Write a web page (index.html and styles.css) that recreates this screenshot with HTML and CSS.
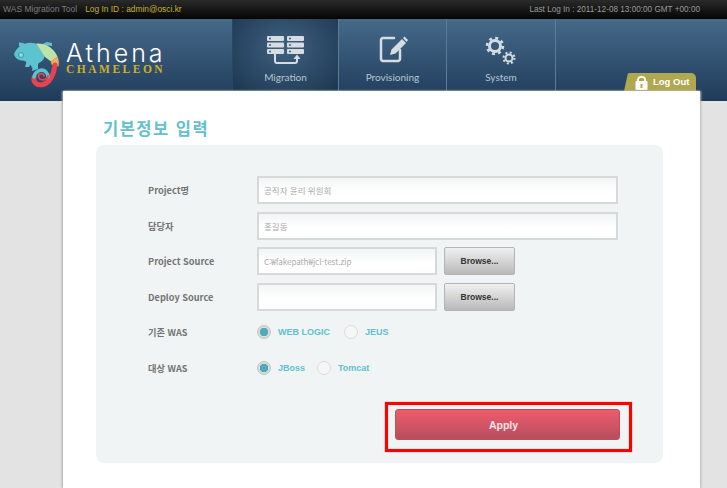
FILE: index.html
```html
<!DOCTYPE html>
<html lang="ko">
<head>
    <meta charset="UTF-8">
    <meta name="viewport" content="width=device-width, initial-scale=1.0">
    <title>Athena Chameleon - 기본정보 입력</title>
    <link rel="stylesheet" href="styles.css">
</head>
<body>
    <div class="topbar">
        <span class="tool-name">WAS Migration Tool</span>
        <span class="login-id">Log In ID : admin@osci.kr</span>
        <span class="last-login">Last Log In : 2011-12-08 13:00:00 GMT +00:00</span>
    </div>

    <header class="header">
        <div class="logo">
            <svg class="logo-mark" viewBox="14 38 48 50" width="48" height="50" aria-hidden="true">
                <path fill="#5cc3cf" d="M14 52C16 47 20 43 25 41.500C31 40 35 41 38 43L45 51C45 56 43 59 39 61L32 66C31 62 27 60 23 58.500C18 58.500 15 56 14 52Z"/>
                <path fill="#5cc3cf" d="M19 44L19 40.500L24 41L22 45ZM40 43L47 40L52 41L52 44L47 43.500L44 46ZM27 58L25 65L29 65L31 61ZM33 63L32 69L38 67L38 61Z"/>
                <path fill="#bfe3a6" d="M36 41.500C45 40.500 54 46 57.500 54.500L51 59.500L45 55L38 44Z"/>
                <path fill="#f0ae5c" d="M57.500 54.500C59 58 59 61 58.500 64.500L51.500 62.500L51 59.500Z"/>
                <path fill="none" stroke="#e4434f" stroke-width="5" stroke-linecap="round" d="M55 63C54 72 50 81 43 82.500C37 84 33 80 34 75.500"/>
                <path fill="none" stroke="#5cc3cf" stroke-width="3.500" stroke-linecap="round" d="M34 75C35 69 42 66 46 70C47 71 48 73 48 75"/>
                <path fill="none" stroke="#e4434f" stroke-width="1.800" stroke-linecap="round" d="M48 74C47 79 39 79 38.500 74.500C38.500 71 43.500 70.500 44 74"/>
                <circle cx="21" cy="53" r="2.500" fill="#8fd8df" stroke="#3a9aa8"/>
            </svg>
            <div class="logo-text">
                <div class="logo-name">Athena</div>
                <div class="logo-sub">CHAMELEON</div>
            </div>
        </div>
        <nav class="nav">
            <a class="nav-tab active">
                <svg viewBox="0 0 40 30" width="40" height="30" aria-hidden="true">
                    <g fill="#d5dde3">
                        <rect x="1" y="1" width="17" height="5" rx="1"/>
                        <rect x="1" y="7.500" width="17" height="5" rx="1"/>
                        <rect x="1" y="14" width="17" height="5" rx="1"/>
                        <rect x="21" y="1" width="17" height="5" rx="1"/>
                        <rect x="21" y="7.500" width="17" height="5" rx="1"/>
                        <rect x="21" y="14" width="17" height="5" rx="1"/>
                        <path d="M27.500 24L31 19.500L34.500 24Z"/>
                    </g>
                    <g fill="#3c5c78">
                        <circle cx="4" cy="3.500" r="1"/><circle cx="4" cy="10" r="1"/><circle cx="4" cy="16.500" r="1"/>
                        <circle cx="24" cy="3.500" r="1"/><circle cx="24" cy="10" r="1"/><circle cx="24" cy="16.500" r="1"/>
                    </g>
                    <path fill="none" stroke="#d5dde3" stroke-width="2" d="M9 19V26C9 27 10 28 11 28H29C30 28 31 27 31 26V23"/>
                </svg>
                <span>Migration</span>
            </a>
            <a class="nav-tab">
                <svg viewBox="0 0 30 28" width="30" height="28" aria-hidden="true">
                    <path fill="none" stroke="#d5dde3" stroke-width="2.500" stroke-linecap="round" d="M15 3H4C3 3 2 4 2 5V24C2 25 3 26 4 26H19C20 26 21 25 21 24V15"/>
                    <path fill="#d5dde3" d="M11 20L12.500 14.500L23 4L27 8L16.500 18.500ZM24 3L25.500 1.500L29 5L27.500 7Z"/>
                </svg>
                <span>Provisioning</span>
            </a>
            <a class="nav-tab">
                <svg viewBox="0 0 32 30" width="32" height="30" aria-hidden="true">
                    <g fill="none" stroke="#d5dde3">
                        <circle cx="11" cy="10" r="5.500" stroke-width="3"/>
                        <circle cx="11" cy="10" r="8" stroke-width="2.500" stroke-dasharray="3 3.280"/>
                        <circle cx="25" cy="22" r="3.500" stroke-width="2"/>
                        <circle cx="25" cy="22" r="5.500" stroke-width="2" stroke-dasharray="2 2.320"/>
                    </g>
                </svg>
                <span>System</span>
            </a>
        </nav>
        <a class="logout">
            <svg viewBox="0 0 13 15" width="13" height="15" aria-hidden="true">
                <path fill="none" stroke="#fff" stroke-width="1.800" d="M3 7V4.500C3 1 10 1 10 4.500V7"/>
                <rect x="0.500" y="6" width="12" height="9" rx="1" fill="#fff"/>
                <rect x="5.500" y="9" width="2" height="4" fill="#b0a850"/>
            </svg>
            <span>Log Out</span>
        </a>
    </header>

    <main class="card">
        <h1 class="title">기본정보 입력</h1>
        <form class="panel">
            <div class="row">
                <label>Project명</label>
                <input class="input wide" type="text" value="공직자 윤리 위원회">
            </div>
            <div class="row">
                <label>담당자</label>
                <input class="input wide" type="text" value="홍길동">
            </div>
            <div class="row">
                <label>Project Source</label>
                <input class="input" type="text" value="C:₩fakepath₩jcl-test.zip">
                <button class="browse" type="button">Browse...</button>
            </div>
            <div class="row">
                <label>Deploy Source</label>
                <input class="input" type="text">
                <button class="browse" type="button">Browse...</button>
            </div>
            <div class="row radio-row first">
                <label>기존 WAS</label>
                <span class="radio checked"></span><span class="radio-text">WEB LOGIC</span>
                <span class="radio"></span><span class="radio-text">JEUS</span>
            </div>
            <div class="row radio-row">
                <label>대상 WAS</label>
                <span class="radio checked"></span><span class="radio-text">JBoss</span>
                <span class="radio"></span><span class="radio-text">Tomcat</span>
            </div>
            <div class="actions">
                <div class="highlight">
                    <button class="apply" type="button">Apply</button>
                </div>
            </div>
        </form>
    </main>
</body>
</html>
```

FILE: styles.css
```css
html, body { height: 488px; overflow: hidden; }
body { margin: 0; background: #e3e3e3; font-family: "Noto Sans CJK KR", "Liberation Sans", sans-serif; }

.topbar { height: 19px; display: flex; align-items: center; padding: 0 27px 0 3px; background: linear-gradient(#2a2a2a, #050505); font: 8.200px/19px "Liberation Sans", sans-serif; }
.tool-name { color: #7c7c7c; font-size: 8.500px; }
.login-id { color: #c4b032; margin-left: 8px; font-size: 8.400px; }
.last-login { color: #999; margin-left: auto; }

.header { position: relative; height: 82px; display: flex; background: linear-gradient(#466a8a, #1f3b5a); }
.logo { width: 232px; box-sizing: border-box; padding: 21px 0 0 14px; display: flex; gap: 4px; }
.logo-text { padding-top: 2px; }
.logo-name { color: #fff; font: 300 25px/22px Inter, "Liberation Sans", sans-serif; letter-spacing: 3px; }
.logo-sub { color: #cdb02a; font: bold 11.500px/9px "Liberation Serif", serif; letter-spacing: 2.500px; margin-top: 1px; }

.nav { display: flex; height: 72px; border-left: 1px solid #2b475f; }
.nav-tab { width: 108px; box-sizing: border-box; height: 72px; display: flex; flex-direction: column; align-items: center; border-right: 1px solid #5c7c98; color: #b7c6d2; font: 10px/14px Lato, sans-serif; position: relative; }
.nav-tab svg { position: absolute; top: 16px; }
.nav-tab span { position: absolute; top: 51px; }
.nav-tab.active { width: 106px; background: radial-gradient(ellipse at 50% 40%, #3f6180, #1c3650); }
.nav-tab:nth-child(2) svg { margin-left: 2px; }
.nav-tab:nth-child(3) { width: 109px; }
.nav-tab:nth-child(3) svg { margin-left: -2px; margin-top: 1px; }

.logout { position: absolute; left: 624px; top: 54px; width: 72px; height: 18px; display: flex; align-items: center; gap: 5px; box-sizing: border-box; padding-left: 11px; background: #b0a850; border-radius: 6px 5px 0 0; color: #fff; font: bold 9.500px/18px "Liberation Sans", sans-serif; clip-path: polygon(4px 0, 100% 0, 100% 100%, 0 100%); }

.card { width: 637px; height: 397px; box-sizing: border-box; margin: -10px 0 0 63px; position: relative; padding: 26px 37px 0 33px; background: #fff; box-shadow: -1px 0 2px #aaa, 1px 0 2px #bbb; }
.title { margin: 0 0 6px 7px; color: #63c0cd; font-size: 16.500px; line-height: 22px; font-weight: 700; letter-spacing: 1.500px; }

.panel { height: 318px; box-sizing: border-box; padding: 31px 0 0 52px; background: #f0f4f5; border-radius: 8px; }
.row { display: flex; align-items: center; height: 28px; margin-bottom: 7.500px; }
.row label { width: 109px; flex: none; color: #747474; font-size: 9.200px; font-weight: 700; }
.input { width: 180px; height: 28px; box-sizing: border-box; padding: 0 5px; border: 2px solid #d6d9d9; background: linear-gradient(#f3f5f5, #fff 60%); color: #aaa; font: 8px "Noto Sans CJK KR", "Liberation Sans", sans-serif; outline: none; }
.input.wide { width: 361px; font-size: 8.500px; }
.browse { width: 71px; height: 28px; margin-left: 7px; padding: 0; border: 1px solid #b4b4b4; border-radius: 2px; background: linear-gradient(#f0f0f0, #b9b9b9); color: #333; font: bold 8.500px "Liberation Sans", sans-serif; }

.radio-row { margin: 0 0 8px; }
.radio-row.first { margin-top: 7px; }
.radio { width: 14px; height: 14px; box-sizing: border-box; flex: none; border-radius: 50%; border: 1px solid #dcdcdc; background: #f6f6f6; margin-right: 7px; margin-left: 12px; }
.row label + .radio { margin-left: 0; }
.radio-row.first .radio { margin-left: 14px; }
.radio-row.first label + .radio { margin-left: 0; }
.radio.checked { background: radial-gradient(circle, #4fabb8 0 4px, #d9dcdc 4.500px); border-color: #bfc3c3; }
.radio-text { color: #62c0cf; font: bold 9px "Liberation Sans", sans-serif; }

.actions { display: flex; justify-content: flex-end; padding-right: 31px; margin-top: 20px; }
.highlight { border: 3px solid #f00; padding: 4px 9px 9px 7px; box-shadow: 0 0 1px #f55, inset 0 0 1px #f55; }
.apply { display: block; width: 225px; height: 31px; padding: 0 8px 0 0; border: 1px solid #b9505c; border-radius: 3px; background: linear-gradient(#ee5c6c, #b74e5c); color: #f4e6e8; font: bold 10.500px "Liberation Sans", sans-serif; }
```
